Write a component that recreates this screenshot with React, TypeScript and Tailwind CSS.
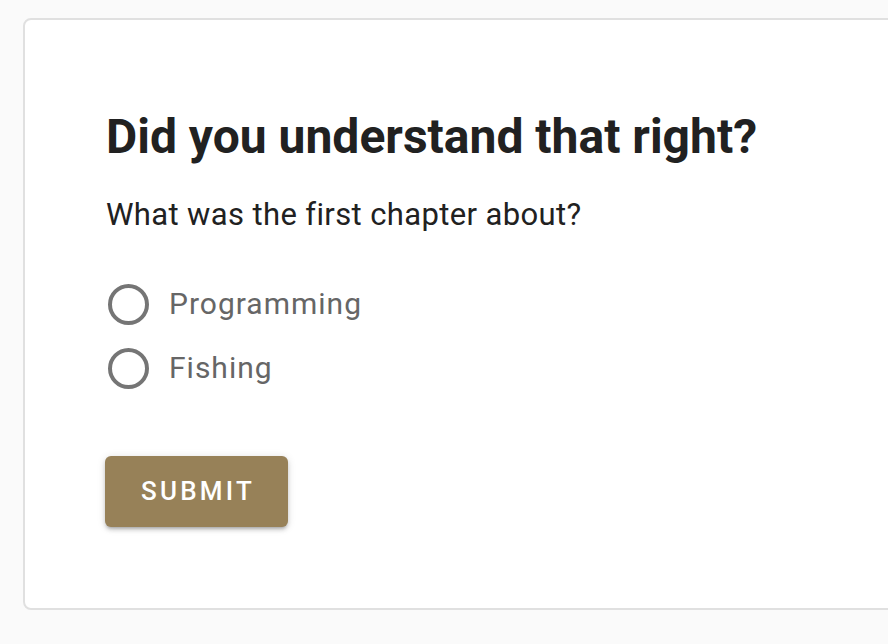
export default function App() {
  const options = ["Programming", "Fishing"]

  return (
    <div className="h-[644px] w-[888px] overflow-hidden bg-[#fafafa] pl-[23px] pt-[18px] font-['Roboto',sans-serif]">
      <div className="h-[592px] w-[1000px] rounded-lg border-2 border-[#e0e0e0] bg-white pl-[81px] pt-[89px]">
        <h1 className="text-[48px] font-bold leading-[56px] text-[#212121]">Did you understand that right?</h1>
        <p className="mt-[32px] text-[31px] leading-[36px] tracking-[0.37px] text-[#212121]">What was the first chapter about?</p>

        <div className="mt-[39px] flex flex-col">
          {options.map((option) => (
            <label key={option} className="flex h-[64px] items-center">
              <span className="ml-[2px] box-border h-[41px] w-[41px] rounded-full border-[4px] border-[#757575]"></span>
              <span className="ml-[20px] text-[30px] leading-[32px] tracking-[1px] text-[#666666]">{option}</span>
            </label>
          ))}
        </div>

        <button className="-ml-px mt-[56px] flex h-[71px] w-[183px] items-center justify-center rounded-md bg-[#978158] pl-[3px] text-[26px] font-medium uppercase tracking-[3.2px] text-white shadow-[0_3px_3px_-2px_rgba(0,0,0,0.2),0_3px_4px_0_rgba(0,0,0,0.14),0_1px_8px_0_rgba(0,0,0,0.12)]">
          Submit
        </button>
      </div>
    </div>
  )
}
